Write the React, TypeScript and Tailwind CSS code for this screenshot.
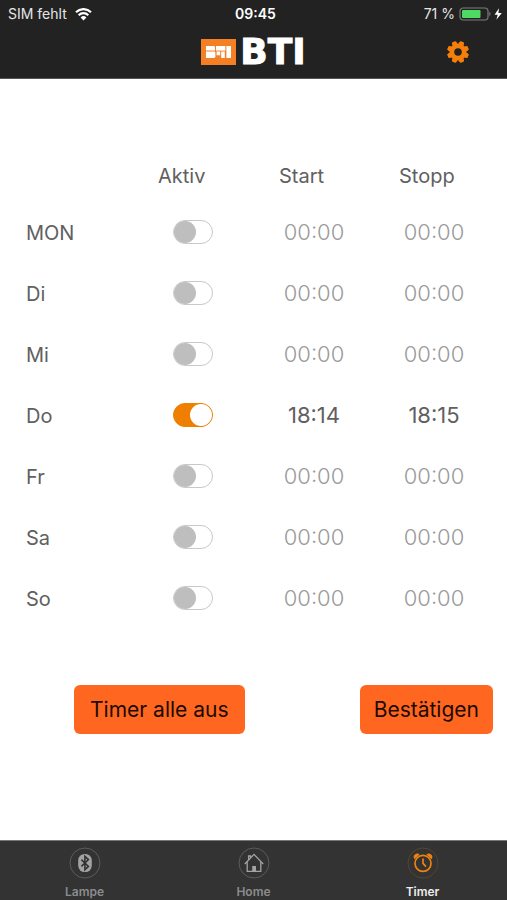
import { useState } from 'react';

type Day = {
  id: string;
  label: string;
  active: boolean;
  start: string;
  stop: string;
};

const INITIAL_DAYS: Day[] = [
  { id: 'mon', label: 'MON', active: false, start: '00:00', stop: '00:00' },
  { id: 'di', label: 'Di', active: false, start: '00:00', stop: '00:00' },
  { id: 'mi', label: 'Mi', active: false, start: '00:00', stop: '00:00' },
  { id: 'do', label: 'Do', active: true, start: '18:14', stop: '18:15' },
  { id: 'fr', label: 'Fr', active: false, start: '00:00', stop: '00:00' },
  { id: 'sa', label: 'Sa', active: false, start: '00:00', stop: '00:00' },
  { id: 'so', label: 'So', active: false, start: '00:00', stop: '00:00' },
];

function WifiIcon() {
  return (
    <svg width="17" height="13" viewBox="0 0 17 13" fill="none" aria-hidden="true">
      <path d="M1 4.2a10.6 10.6 0 0 1 15 0" stroke="#fff" strokeWidth="2.2" />
      <path d="M3.7 7.2a6.8 6.8 0 0 1 9.6 0" stroke="#fff" strokeWidth="2.2" />
      <path d="M8.5 12.4 5.6 9.5a4.1 4.1 0 0 1 5.8 0z" fill="#fff" />
    </svg>
  );
}

function BatteryIcon() {
  return (
    <svg width="44" height="14" viewBox="0 0 44 14" aria-hidden="true">
      <rect x="1" y="1" width="28" height="12" rx="3.2" fill="none" stroke="#7c7c7c" strokeWidth="1.2" />
      <rect x="3" y="3" width="18.5" height="8" rx="1.2" fill="#4cd964" />
      <path d="M30.3 4.8c1.6.5 1.6 3.9 0 4.4z" fill="#7c7c7c" />
      <path d="M40 1.2 35.6 7.8h3.1l-1.3 5 5.4-6.9h-3.4z" fill="#fff" />
    </svg>
  );
}

function LogoMark() {
  return (
    <svg width="35" height="26" viewBox="0 0 35 26" aria-hidden="true">
      <rect width="35" height="26" fill="#f47f25" />
      <g fill="#fff">
        <path d="M5 7h7.6q1.4 0 1.4 1.4v3.2H5z" />
        <path d="M5 12.6h8q1.4 0 1.4 1.4v3.6q0 1.4-1.4 1.4H5z" />
        <path d="M15 7h9.4v4.6H15z" />
        <path d="M15.6 12.6h3.6v3.6h-3.6zM20.2 12.6h3.6V19h-3.6z" />
        <path d="M25.4 7H30v12h-4.6z" />
      </g>
    </svg>
  );
}

function GearIcon() {
  return (
    <svg width="24" height="24" viewBox="0 0 24 24" aria-hidden="true">
      <g fill="#f57f0a">
        {[22.5, 67.5, 112.5, 157.5].map((angle) => (
          <path
            key={angle}
            transform={`rotate(${angle} 12 12)`}
            d="M10.6 1h2.8q.6 0 .8.6l.9 3.4v14l-.9 3.4q-.2.6-.8.6h-2.8q-.6 0-.8-.6L8.9 19V5l.9-3.4q.2-.6.8-.6z"
          />
        ))}
        <circle cx="12" cy="12" r="8" />
      </g>
      <circle cx="12" cy="12" r="3.8" fill="#222" />
    </svg>
  );
}

function LampIcon() {
  return (
    <svg width="32" height="32" viewBox="0 0 32 32" fill="none" aria-hidden="true">
      <circle cx="16" cy="16" r="15" stroke="#5c5c5c" />
      <rect x="9.2" y="7" width="13.6" height="18" rx="6.4" fill="#a3a3a3" />
      <path d="m12.4 12.6 7 6.8-3.5 3.3V9.3l3.5 3.3-7 6.8" stroke="#333" strokeWidth="1.6" />
    </svg>
  );
}

function HomeIcon() {
  return (
    <svg width="32" height="32" viewBox="0 0 32 32" fill="none" aria-hidden="true">
      <circle cx="16" cy="16" r="15" stroke="#5c5c5c" />
      <g stroke="#a3a3a3" strokeWidth="1.3">
        <path d="M6.8 17 16 7.4 25.2 17" />
        <path d="M9.2 15v9.3h13.6V15M10.6 12.8V9h2v1.8" />
      </g>
      <path d="M14.2 19h3.8v5.3h-3.8z" fill="#a3a3a3" />
    </svg>
  );
}

function TimerIcon() {
  return (
    <svg width="32" height="32" viewBox="0 0 32 32" fill="none" aria-hidden="true">
      <circle cx="16" cy="16" r="15" stroke="#5a432c" />
      <circle cx="16" cy="16.4" r="8" stroke="#f0820f" strokeWidth="1.7" />
      <path d="M16 11.4v5l3 3.2" stroke="#f0820f" strokeWidth="1.7" />
      <path d="M7.6 12.2a3.4 3.4 0 0 1 5-4.6zM24.4 12.2a3.4 3.4 0 0 0-5-4.6z" fill="#f0820f" />
    </svg>
  );
}

const TABS = [
  { label: 'Lampe', Icon: LampIcon, current: false },
  { label: 'Home', Icon: HomeIcon, current: false },
  { label: 'Timer', Icon: TimerIcon, current: true },
];

function TimeButton({ day, time, kind }: { day: Day; time: string; kind: string }) {
  return (
    <button
      type="button"
      aria-label={`${day.label} ${kind} ${time}`}
      className={`w-[70px] text-center text-[22px] leading-7 ${
        day.active ? 'text-[#606060]' : 'font-light text-[#9a9a9a]'
      }`}
    >
      {time}
    </button>
  );
}

export default function App() {
  const [days, setDays] = useState<Day[]>(INITIAL_DAYS);

  const toggleDay = (id: string) => {
    setDays((prev) => prev.map((d) => (d.id === id ? { ...d, active: !d.active } : d)));
  };

  const allOff = () => {
    setDays((prev) => prev.map((d) => ({ ...d, active: false })));
  };

  return (
    <div className="min-h-screen flex flex-col bg-white font-['Inter',sans-serif]">
      <header className="bg-[#222] text-white border-b border-[#555]">
        {/* Status bar */}
        <div className="grid grid-cols-3 items-center h-7 pl-2 pr-1 text-sm">
          <div className="flex items-center gap-2 text-[#e6e6e6] whitespace-nowrap">
            SIM fehlt
            <WifiIcon />
          </div>
          <span className="text-center font-semibold">09:45</span>
          <div className="flex items-center justify-end gap-1 text-[#e6e6e6] whitespace-nowrap">
            71 %
            <BatteryIcon />
          </div>
        </div>
        {/* Logo and settings */}
        <div className="grid grid-cols-3 items-center h-[50px] pb-[2px]">
          <div className="col-start-2 flex items-center justify-center gap-1">
            <LogoMark />
            <span className="font-['DejaVu_Sans',sans-serif] font-bold text-4xl leading-6 [-webkit-text-stroke:1px_white]">
              BTI
            </span>
          </div>
          <button type="button" aria-label="Einstellungen" className="justify-self-end mr-[37px]">
            <GearIcon />
          </button>
        </div>
      </header>

      <main className="flex-1 pt-[72px] text-[#606060]">
        <table className="w-full table-fixed text-left">
          <thead>
            <tr className="h-[50px] text-xl">
              <td />
              <th scope="col" className="w-[121px] font-normal">Aktiv</th>
              <th scope="col" className="w-[120px] font-normal">Start</th>
              <th scope="col" className="w-[108px] font-normal">Stopp</th>
            </tr>
          </thead>
          <tbody>
            {days.map((day) => (
              <tr key={day.id} className="h-[61px]">
                <th scope="row" className="pl-[26px] pt-[2px] font-normal text-xl">
                  <label htmlFor={`active-${day.id}`}>{day.label}</label>
                </th>
                <td>
                  <input
                    id={`active-${day.id}`}
                    type="checkbox"
                    role="switch"
                    checked={day.active}
                    onChange={() => toggleDay(day.id)}
                    className="appearance-none block w-10 h-6 ml-[15px] rounded-full border border-[#c8c8c8] bg-white before:block before:size-[22px] before:rounded-full before:bg-[#bebebe] checked:border-[#ee7f00] checked:bg-[#ee7f00] checked:before:ml-4 checked:before:bg-white"
                  />
                </td>
                <td>
                  <TimeButton day={day} time={day.start} kind="Start" />
                </td>
                <td>
                  <TimeButton day={day} time={day.stop} kind="Stopp" />
                </td>
              </tr>
            ))}
          </tbody>
        </table>

        <div className="flex justify-between gap-4 mt-[57px] pl-[74px] pr-[14px] text-[21px] text-[#1c0b02]">
          <button type="button" onClick={allOff} className="h-[49px] px-4 rounded-md bg-[#ff6720]">
            Timer alle aus
          </button>
          <button type="button" className="h-[49px] px-[14px] rounded-md bg-[#ff6720]">
            Bestätigen
          </button>
        </div>
      </main>

      <nav className="grid grid-cols-3 h-[60px] bg-[#333] border-t border-[#777]">
        {TABS.map(({ label, Icon, current }) => (
          <a
            key={label}
            href={`#${label.toLowerCase()}`}
            aria-current={current ? 'page' : undefined}
            className={`flex flex-col items-center gap-[5px] pt-[6px] text-xs font-semibold ${
              current ? 'text-[#ececec]' : 'text-[#8c8c8c]'
            }`}
          >
            <Icon />
            {label}
          </a>
        ))}
      </nav>
    </div>
  );
}
